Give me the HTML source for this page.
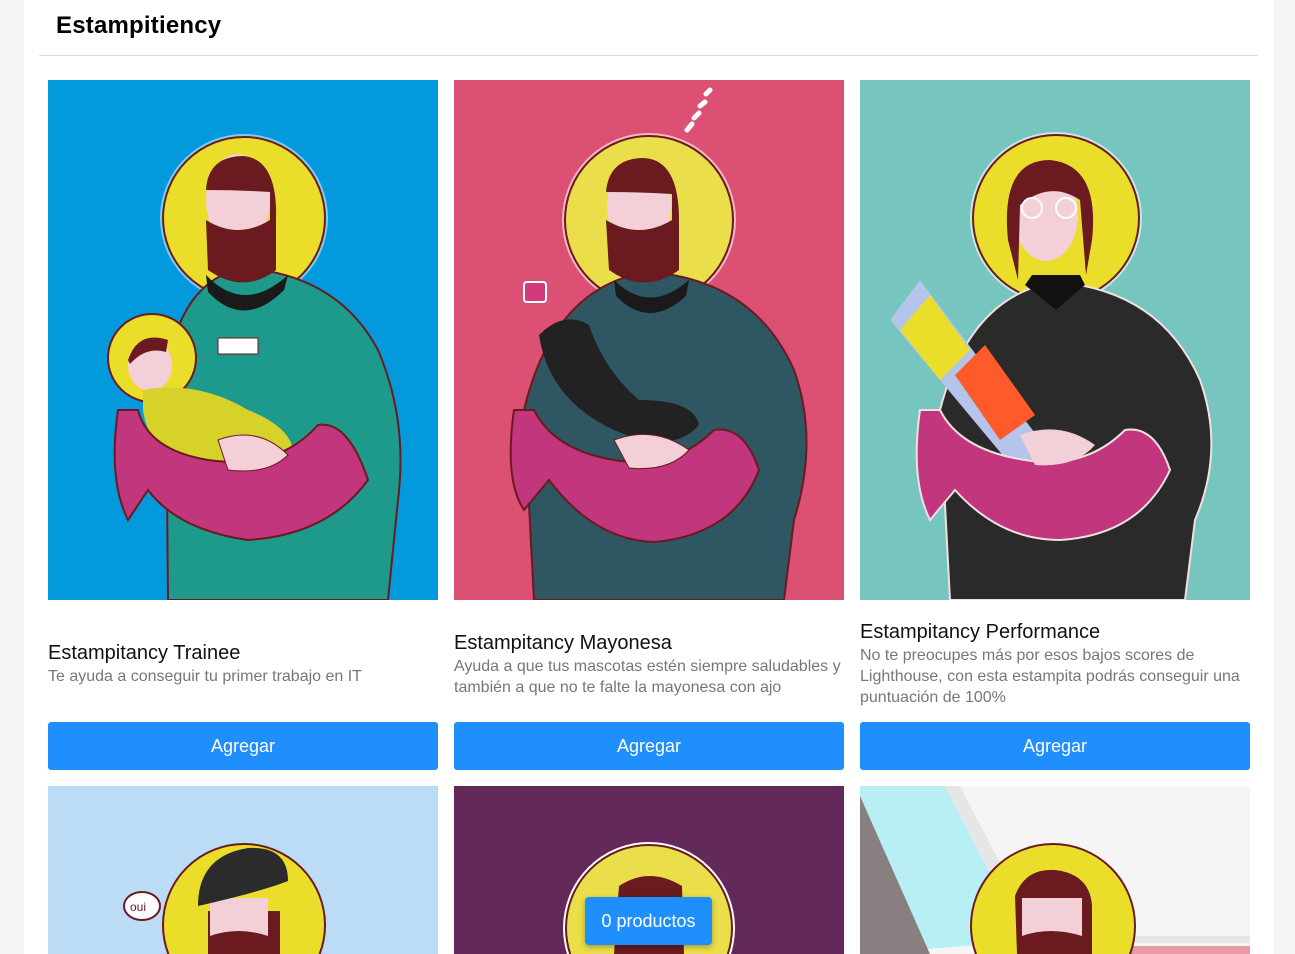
<!DOCTYPE html>
<html><head><meta charset="utf-8"><style>
*{margin:0;padding:0;box-sizing:border-box}
html,body{width:1295px;height:954px;overflow:hidden}
body{background:#f4f4f4;font-family:"Liberation Sans",sans-serif;position:relative}
.wrap{position:absolute;left:24px;top:0;width:1250px;height:954px;background:#fff}
h1{position:absolute;left:32px;top:12px;font-size:24px;font-weight:bold;color:#000;letter-spacing:0.2px}
.line{position:absolute;left:15px;top:55px;width:1219px;height:1px;background:#ddd}
.card{position:absolute;width:390px}
.img{position:absolute;left:0;width:390px;height:520px;overflow:hidden}
.txt{position:absolute;left:0;width:390px}
.t{font-size:20px;color:#111;line-height:24px}
.d{font-size:16px;color:#777;line-height:21px;margin-top:1px}
.btn{position:absolute;left:0;top:642px;width:390px;height:48px;background:#1f8ffe;border-radius:3px;color:#fff;font-size:18px;text-align:center;line-height:48px}
.float{position:absolute;left:585px;top:897px;width:127px;height:48px;background:#1f8ffe;border-radius:4px;color:#fff;font-size:18px;text-align:center;line-height:48px;box-shadow:0 2px 6px rgba(0,0,0,.3)}
</style></head><body>
<div class="wrap">
<h1>Estampitiency</h1>
<div class="line"></div>
</div>

<div class="card" style="left:48px;top:80px">
<div class="img" style="top:0">
<svg width="390" height="520"><rect width="390" height="520" fill="#039add"/>
<circle cx="196" cy="138" r="84" fill="#fff" opacity=".5"/><circle cx="196" cy="138" r="81" fill="#eade2a" stroke="#6b1a1f" stroke-width="2"/>
<path d="M120,520 L118,300 Q130,200 196,188 Q290,195 330,270 Q360,340 350,420 L340,520Z" fill="#1d9a8c" stroke="#6b1a1f" stroke-width="2"/>
<path d="M158,195 Q196,235 240,195 L236,210 Q196,250 160,212Z" fill="#1a1a1a"/>
<ellipse cx="190" cy="120" rx="32" ry="46" fill="#f3d0d8"/>
<path d="M158,110 Q160,76 196,76 Q230,80 228,140 L228,190 Q196,215 160,190 L158,140 Q190,160 222,140 L222,112 Q190,110 158,110Z" fill="#6b1a1f"/>
<circle cx="104" cy="278" r="44" fill="#eade2a" stroke="#6b1a1f" stroke-width="2"/>
<ellipse cx="102" cy="285" rx="22" ry="26" fill="#f3d0d8"/>
<path d="M80,280 Q90,250 120,260 L118,272 Q98,266 82,284Z" fill="#6b1a1f"/>
<path d="M95,310 Q150,300 200,330 Q250,350 245,380 L150,400 Q100,370 95,330Z" fill="#d7d22a"/>
<path d="M70,330 Q60,400 80,440 L100,410 Q130,450 200,460 Q280,455 320,400 Q300,340 270,345 Q230,390 160,380 Q100,370 90,330Z" fill="#c2367d" stroke="#6b1a1f" stroke-width="2"/>
<path d="M170,360 Q210,345 240,375 Q220,395 180,390Z" fill="#f3d0d8" stroke="#6b1a1f"/>
<rect x="170" y="258" width="40" height="16" fill="#fff" stroke="#6b1a1f"/>
</svg></div>
<div class="txt" style="top:561px"><div class="t">Estampitancy Trainee</div><div class="d">Te ayuda a conseguir tu primer trabajo en IT</div></div>
<div class="btn">Agregar</div>
</div>

<div class="card" style="left:454px;top:80px">
<div class="img" style="top:0">
<svg width="390" height="520"><rect width="390" height="520" fill="#dc5173"/>
<circle cx="195" cy="140" r="87" fill="#fff" opacity=".6"/><circle cx="195" cy="140" r="84" fill="#eade4a" stroke="#6b1a1f" stroke-width="2"/>
<path d="M80,520 L70,330 Q100,205 195,192 Q300,200 340,290 Q365,360 340,440 L330,520Z" fill="#2e5663" stroke="#6b1a1f" stroke-width="2"/>
<path d="M160,200 Q195,235 235,200 L232,216 Q195,250 162,216Z" fill="#1a1a1a"/>
<ellipse cx="185" cy="125" rx="32" ry="46" fill="#f3d0d8"/>
<path d="M152,112 Q155,78 190,78 Q225,80 225,140 L225,190 Q190,215 155,190 L152,140 Q185,160 218,140 L218,114 Q185,112 152,112Z" fill="#6b1a1f"/>
<path d="M60,330 Q50,400 70,430 L95,400 Q140,460 200,462 Q280,455 305,390 Q290,345 260,350 Q220,390 160,380 Q100,370 80,330Z" fill="#c2367d" stroke="#6b1a1f" stroke-width="2"/>
<path d="M85,255 Q110,230 135,245 Q150,290 185,320 Q240,320 245,345 Q220,375 160,350 Q95,320 85,255Z" fill="#222"/>
<path d="M160,360 Q200,345 235,370 Q215,392 175,388Z" fill="#f3d0d8" stroke="#6b1a1f"/>
<rect x="70" y="202" width="22" height="20" rx="3" fill="#d33a7a" stroke="#fff" stroke-width="2"/>
<path d="M233,50 l5,-6 M240,38 l5,-5 M246,26 l5,-4 M252,14 l4,-4" stroke="#fff" stroke-width="5" stroke-linecap="round"/>
</svg></div>
<div class="txt" style="top:551px"><div class="t">Estampitancy Mayonesa</div><div class="d">Ayuda a que tus mascotas estén siempre saludables y también a que no te falte la mayonesa con ajo</div></div>
<div class="btn">Agregar</div>
</div>

<div class="card" style="left:860px;top:80px">
<div class="img" style="top:0">
<svg width="390" height="520"><rect width="390" height="520" fill="#76c6bf"/>
<circle cx="196" cy="138" r="86" fill="#fff" opacity=".6"/><circle cx="196" cy="138" r="83" fill="#eade2a" stroke="#6b1a1f" stroke-width="2"/>
<path d="M90,520 L80,330 Q110,215 196,202 Q300,210 340,300 Q365,370 335,440 L325,520Z" fill="#2a2a2a" stroke="#f0e0e0" stroke-width="2"/>
<path d="M165,205 L196,230 L225,205 L220,195 L172,195Z" fill="#111"/>
<ellipse cx="186" cy="135" rx="32" ry="46" fill="#f3d0d8"/>
<path d="M148,160 Q140,80 190,80 Q240,85 232,160 L226,195 L220,120 Q190,100 160,125 L158,200Z" fill="#6b1a1f"/>
<circle cx="172" cy="128" r="10" fill="none" stroke="#fff" stroke-width="2"/><circle cx="206" cy="128" r="10" fill="none" stroke="#fff" stroke-width="2"/>
<path d="M30,240 L60,200 L210,400 L180,420Z" fill="#b4c4ea"/>
<path d="M40,250 L70,215 L110,270 L80,300Z" fill="#eade2a"/>
<path d="M95,295 L125,265 L175,335 L140,360Z" fill="#ff5a2a"/>
<path d="M60,330 Q50,400 70,440 L95,410 Q140,460 200,460 Q280,455 310,390 Q295,345 265,350 Q225,390 165,380 Q100,370 80,330Z" fill="#c2367d" stroke="#f0e0e0" stroke-width="2"/>
<path d="M160,355 Q200,340 235,365 Q215,388 175,385Z" fill="#f3d0d8"/>
</svg></div>
<div class="txt" style="top:540px"><div class="t">Estampitancy Performance</div><div class="d">No te preocupes más por esos bajos scores de Lighthouse, con esta estampita podrás conseguir una puntuación de 100%</div></div>
<div class="btn">Agregar</div>
</div>

<div class="card" style="left:48px;top:786px">
<div class="img" style="top:0;height:168px">
<svg width="390" height="168"><rect width="390" height="168" fill="#bcdbf4"/>
<circle cx="196" cy="139" r="81" fill="#eade2a" stroke="#6b1a1f" stroke-width="2"/>
<path d="M160,125 L232,125 L232,168 L160,168Z" fill="#6b1a1f"/>
<path d="M162,112 L220,112 L220,150 Q190,140 162,150Z" fill="#f3d0d8"/>
<path d="M150,120 Q150,70 200,62 Q240,60 240,95 Q215,105 150,120Z" fill="#2b2b2b"/>
<ellipse cx="94" cy="120" rx="18" ry="14" fill="#fff" stroke="#6b1a1f" stroke-width="2"/>
<text x="82" y="125" font-size="12" fill="#6b1a1f" font-family="Liberation Sans">oui</text>
</svg></div></div>

<div class="card" style="left:454px;top:786px">
<div class="img" style="top:0;height:168px">
<svg width="390" height="168"><rect width="390" height="168" fill="#63295a"/>
<circle cx="195" cy="142" r="86" fill="#fff"/><circle cx="195" cy="142" r="83" fill="#eade4a" stroke="#6b1a1f" stroke-width="2"/>
<path d="M160,168 L165,100 Q195,80 228,100 L230,168Z" fill="#6b1a1f"/>
</svg></div></div>

<div class="card" style="left:860px;top:786px">
<div class="img" style="top:0;height:168px">
<svg width="390" height="168"><rect width="390" height="168" fill="#f5f5f5"/>
<path d="M0,0 L85,0 L170,155 L0,168Z" fill="#b8eff5"/>
<path d="M0,10 L70,168 L0,168Z" fill="#8a7f80"/>
<path d="M85,0 L100,0 L178,150 L390,150 L390,157 L165,157Z" fill="#e6e6e6"/>
<path d="M140,160 L390,160 L390,168 L140,168Z" fill="#ea9aa5"/>
<circle cx="193" cy="140" r="82" fill="#eade2a" stroke="#6b1a1f" stroke-width="2"/>
<path d="M157,168 L155,110 Q165,82 195,84 Q230,88 232,120 L232,168Z" fill="#6b1a1f"/>
<path d="M162,112 L222,112 L222,150 Q190,140 162,150Z" fill="#f3d0d8"/>
</svg></div></div>

<div class="float">0 productos</div>
</body></html>
